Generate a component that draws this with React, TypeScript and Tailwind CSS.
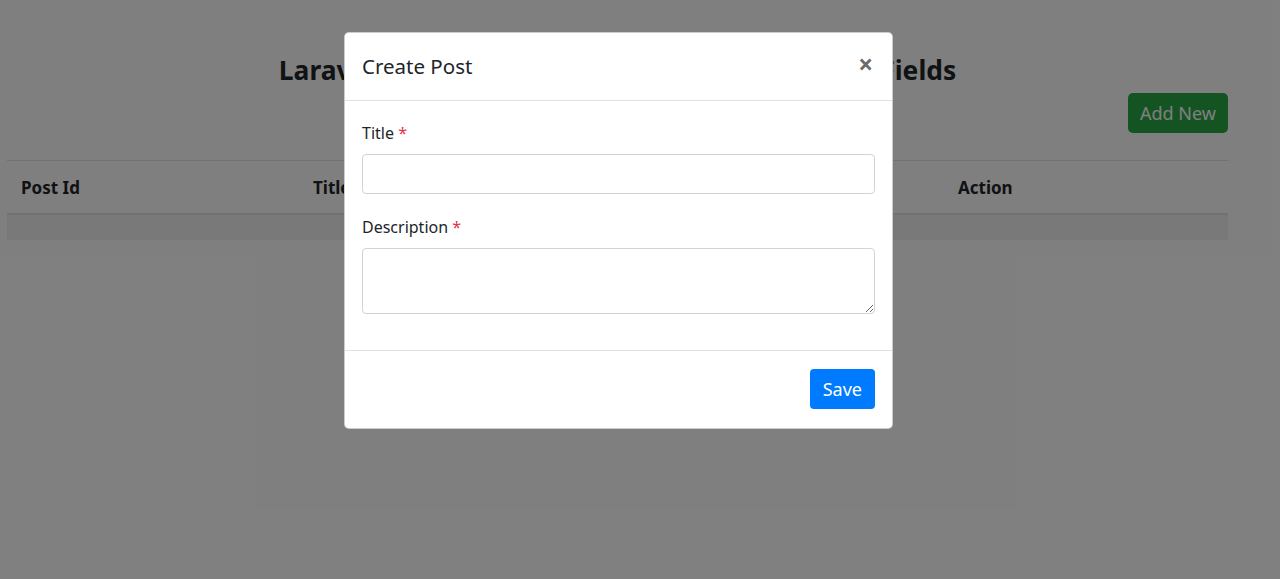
export default function App() {
  return (
    <div className="relative min-h-[579px] bg-white font-['Noto_Sans',sans-serif] text-[#212529]">
      <section className="ml-[7px] w-[1221px] pt-[52px]">
        <h3 className="text-center text-[26.4px] font-bold leading-[36px]">
          Laravel 8 Ajax CRUD with Validation Required Fields
        </h3>
        <div className="mt-[5px] flex justify-end">
          <button className="h-10 rounded-[5px] bg-[#28a745] px-[12px] text-[18px] text-white">
            Add New
          </button>
        </div>
        <table className="mt-[27px] w-full border-t border-[#dee2e6] text-left">
          <thead>
            <tr className="h-[53px] border-b-2 border-[#dee2e6]">
              <th className="w-[294px] px-[14px] pt-[1px] text-[17px] font-bold">Post Id</th>
              <th className="w-[322px] px-[12px] pt-[1px] text-[17px] font-bold">Title</th>
              <th className="w-[323px] px-[12px] pt-[1px] text-[17px] font-bold">Description</th>
              <th className="px-[12px] pt-[1px] text-[17px] font-bold">Action</th>
            </tr>
          </thead>
          <tbody>
            <tr className="h-[26px] bg-[#f2f2f2]">
              <td colSpan={4}></td>
            </tr>
          </tbody>
        </table>
      </section>

      <div className="absolute inset-0 bg-black/50"></div>

      <div className="absolute left-[344px] top-[32px] w-[549px] rounded-[5px] border border-black/20 bg-white">
        <div className="flex h-[68px] items-center justify-between border-b border-[#dee2e6] px-[17px]">
          <h5 className="mb-[2px] text-[20.5px] leading-[30px]">Create Post</h5>
          <button className="mb-[5px] mr-[2px] text-[26px] font-bold leading-none text-[#6c6c6c]">×</button>
        </div>
        <div className="px-[17px] pb-[36px] pt-[20px]">
          <label className="block text-[16px] leading-[24px]">
            Title <span className="text-[#dc3545]">*</span>
          </label>
          <input className="mt-[9px] block h-10 w-full rounded-[4px] border border-[#ced4da]" />
          <label className="mt-[21px] block text-[16px] leading-[24px]">
            Description <span className="text-[#dc3545]">*</span>
          </label>
          <textarea className="mt-[9px] block h-[66px] w-full rounded-[4px] border border-[#ced4da]" />
        </div>
        <div className="flex h-[78px] items-center justify-end border-t border-[#dee2e6] px-[17px]">
          <button className="mb-[1px] h-10 rounded-[4px] bg-[#007bff] px-[13px] text-[18px] text-white">
            Save
          </button>
        </div>
      </div>
    </div>
  );
}
